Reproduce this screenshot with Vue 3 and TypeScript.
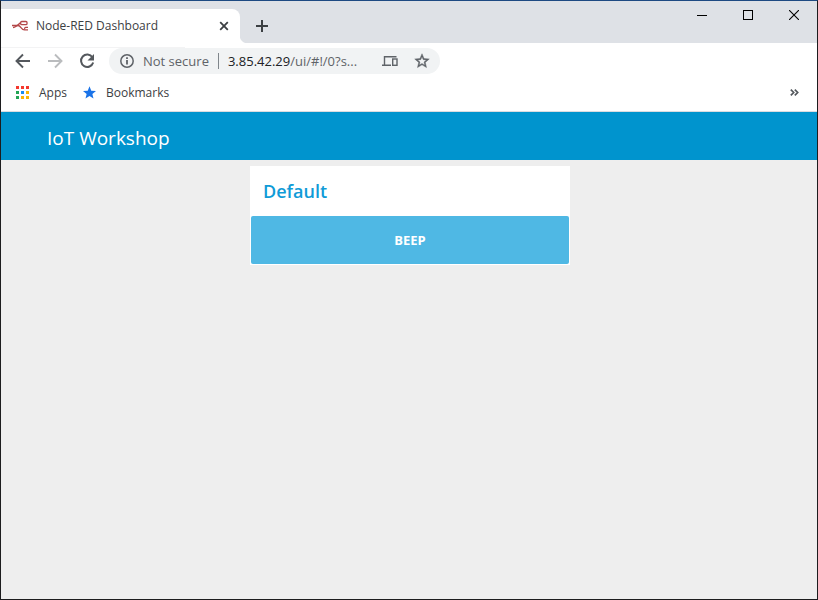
<script setup lang="ts">
import { ref } from 'vue'

const pageTitle = ref<string>('IoT Workshop')
const groupName = ref<string>('Default')
const host = '3.85.42.29'
const path = '/ui/#!/0?s...'

const appDots: string[] = [
  '#f4382e', '#f4382e', '#f4382e',
  '#23a455', '#1a8cf0', '#fbb404',
  '#23a455', '#fbb404', '#fbb404',
]
</script>

<template>
  <div class="window">
    <header class="tab-strip">
      <div class="tab">
        <svg class="favicon" viewBox="0 0 16 12" width="16" height="12" aria-hidden="true">
          <g fill="none" stroke="#b4484a" stroke-width="1.300">
            <path d="M0 5.500H4.500C7 5.500 6.500 3 9 3" />
            <path d="M1 7.500C4 7.500 4 5.500 6 5.500C9 5.500 9 9.800 12.500 9.800H16" />
            <rect x="8.700" y="1.500" width="6.300" height="3.200" rx="1" />
            <path d="M16 7.300H13.500C12.500 7.300 12.500 8 12.500 9.500" />
          </g>
        </svg>
        <span class="tab-title">Node-RED Dashboard</span>
        <button class="icon-button tab-close" type="button" aria-label="Close tab">
          <svg viewBox="0 0 10 10" width="10" height="10"><path d="M1.200 1.200L8.800 8.800M8.800 1.200L1.200 8.800" stroke="#3c4043" stroke-width="1.800" /></svg>
        </button>
      </div>
      <button class="icon-button new-tab" type="button" aria-label="New tab">
        <svg viewBox="0 0 12 12" width="12" height="12"><path d="M6 0V12M0 6H12" stroke="#3c4043" stroke-width="2" /></svg>
      </button>
      <div class="window-controls">
        <button class="icon-button" type="button" aria-label="Minimize">
          <svg viewBox="0 0 10 10" width="10" height="10"><path d="M0 5.500H10" stroke="#000" /></svg>
        </button>
        <button class="icon-button" type="button" aria-label="Maximize">
          <svg viewBox="0 0 10 10" width="10" height="10"><rect x=".5" y=".5" width="9" height="9" fill="none" stroke="#000" /></svg>
        </button>
        <button class="icon-button" type="button" aria-label="Close">
          <svg viewBox="0 0 10 10" width="10" height="10"><path d="M0 0L10 10M10 0L0 10" stroke="#000" stroke-width="1.100" /></svg>
        </button>
      </div>
    </header>

    <nav class="toolbar" aria-label="Navigation">
      <button class="icon-button nav-button" type="button" aria-label="Back">
        <svg viewBox="0 0 16 16" width="16" height="16"><path d="M15 8H2M8 1.500L1.500 8L8 14.500" fill="none" stroke="#54585d" stroke-width="1.900" /></svg>
      </button>
      <button class="icon-button nav-button" type="button" aria-label="Forward" disabled>
        <svg viewBox="0 0 16 16" width="16" height="16"><path d="M1 8H14M8 1.500L14.500 8L8 14.500" fill="none" stroke="#babcbe" stroke-width="1.900" /></svg>
      </button>
      <button class="icon-button nav-button" type="button" aria-label="Reload">
        <svg viewBox="0 0 16 16" width="16" height="16"><path d="M13.400 4.200A6.200 6.200 0 1 0 14.200 9.500" fill="none" stroke="#54585d" stroke-width="2" /><path d="M15 1V7.500H8.500Z" fill="#54585d" /></svg>
      </button>
      <div class="address">
        <svg class="info" viewBox="0 0 14 14" width="14" height="14" aria-hidden="true"><circle cx="7" cy="7" r="6.200" fill="none" stroke="#5f6368" stroke-width="1.500" /><path d="M6.100 6H7.900V10.500H6.100ZM6.100 3.300H7.900V5H6.100Z" fill="#5f6368" /></svg>
        <span class="security">Not secure</span>
        <span class="divider"></span>
        <span class="url"><span class="host">{{ host }}</span>{{ path }}</span>
        <button class="icon-button" type="button" aria-label="Send to your devices">
          <svg viewBox="0 0 16 12" width="16" height="12"><g fill="none" stroke="#5f6368" stroke-width="1.400"><path d="M2.500 9.500V1.700H14.500M0 10.300H9" /><rect x="10.700" y="4" width="4.300" height="6.300" /></g></svg>
        </button>
        <button class="icon-button" type="button" aria-label="Bookmark this tab">
          <svg viewBox="1 1 22 22" width="16" height="16"><path fill="#5f6368" d="M22 9.240l-7.190-.62L12 2 9.190 8.630 2 9.240l5.460 4.730L5.820 21 12 17.270 18.180 21l-1.630-7.030L22 9.240zM12 15.400l-3.760 2.270 1-4.280-3.320-2.880 4.380-.38L12 6.100l1.710 4.040 4.380.38-3.320 2.880 1 4.280L12 15.400z" stroke="#5f6368" stroke-width=".6" /></svg>
        </button>
      </div>
    </nav>

    <nav class="bookmarks" aria-label="Bookmarks">
      <a class="bookmark" href="#apps">
        <span class="apps-grid">
          <span v-for="(color, i) in appDots" :key="i" :style="{ background: color }"></span>
        </span>
        Apps
      </a>
      <a class="bookmark" href="#bookmarks">
        <svg viewBox="0 0 14 14" width="13" height="13" aria-hidden="true"><path fill="#1a73e8" d="M7 .3L8.900 5L14 5.300L10.100 8.500L11.300 13.500L7 10.700L2.700 13.500L3.900 8.500L0 5.300L5.100 5Z" /></svg>
        Bookmarks
      </a>
      <button class="icon-button overflow" type="button" aria-label="More bookmarks">
        <svg viewBox="0 0 9 7" width="9" height="7"><path d="M.8 .6L3.700 3.500L.8 6.400M4.800 .6L7.700 3.500L4.800 6.400" fill="none" stroke="#54585d" stroke-width="1.700" /></svg>
      </button>
    </nav>

    <div class="dashboard">
      <header class="title-bar"><h1>{{ pageTitle }}</h1></header>
      <main>
        <section class="card">
          <h2>{{ groupName }}</h2>
          <button class="beep" type="button">BEEP</button>
        </section>
      </main>
    </div>
  </div>
</template>

<style>
body {
  margin: 0;
}
</style>

<style scoped>
.window {
  box-sizing: border-box;
  min-height: 100vh;
  display: flex;
  flex-direction: column;
  border: 1px solid #1c1c1e;
  border-top-color: #1d4a82;
  background: #fff;
  font-family: "Open Sans", "Noto Sans", sans-serif;
}
.icon-button {
  display: flex;
  align-items: center;
  justify-content: center;
  padding: 0;
  border: 0;
  background: transparent;
}
.tab-strip {
  display: flex;
  height: 42px;
  background: #dee1e6;
}
.tab {
  box-sizing: border-box;
  display: flex;
  align-items: center;
  width: 239px;
  height: 34px;
  margin-top: 8px;
  padding: 0 10px 0 11px;
  border-radius: 0 8px 0 0;
  background: #fff;
}
.tab-title {
  flex: 1;
  margin-left: 8px;
  color: #3c4043;
  font-size: 12px;
  line-height: 16px;
  white-space: nowrap;
}
.tab-close {
  width: 12px;
  height: 16px;
}
.new-tab {
  width: 44px;
  height: 34px;
  margin-top: 8px;
}
.tab-strip {
  background: radial-gradient(circle at 100% 0, #dee1e6 8px, #fff 9px) 239px 100% / 8px 8px no-repeat, #dee1e6;
}
.window-controls {
  display: flex;
  height: 28px;
  margin-left: auto;
}
.window-controls .icon-button {
  width: 46px;
}
.toolbar {
  display: flex;
  align-items: center;
  height: 36px;
  padding: 0 6px;
  background: linear-gradient(#f3f3f4, #f3f3f4) 0 4px / 184px 1px no-repeat;
}
.nav-button {
  width: 32px;
  height: 32px;
}
.address {
  box-sizing: border-box;
  flex: 1;
  display: flex;
  align-items: center;
  max-width: 331px;
  height: 26px;
  margin-left: 6px;
  padding: 0 10px 0 11px;
  border-radius: 13px;
  background: #f1f3f4;
  color: #5f6368;
  font-size: 13px;
  line-height: 20px;
  white-space: nowrap;
}
.info {
  flex: none;
}
.security {
  margin-left: 9px;
}
.divider {
  width: 1px;
  height: 16px;
  margin: 0 9px;
  background: #80868b;
}
.url {
  flex: 1;
}
.host {
  color: #202124;
}
.address .icon-button {
  margin-left: 16px;
}
.bookmarks {
  display: flex;
  align-items: center;
  gap: 16px;
  height: 27px;
  padding: 0 18px 5px 15px;
  border-bottom: 1px solid #dadce0;
}
.bookmark {
  display: flex;
  align-items: center;
  gap: 10px;
  color: #3c4043;
  font-size: 12px;
  line-height: 16px;
  text-decoration: none;
}
.apps-grid {
  display: grid;
  grid-template-columns: repeat(3, 3px);
  grid-auto-rows: 3px;
  gap: 2px;
}
.overflow {
  height: 16px;
  margin-left: auto;
}
.dashboard {
  flex: 1;
  background: #eee;
}
.title-bar {
  height: 48px;
  padding-left: 46px;
  background: #0094ce;
}
h1 {
  margin: 0;
  padding-top: 2px;
  color: #fff;
  font-size: 19px;
  font-weight: 400;
  line-height: 48px;
}
main {
  display: flex;
  justify-content: center;
  padding: 6px;
}
.card {
  width: 320px;
  margin-left: 2px;
  background: #fff;
}
h2 {
  margin: 0;
  padding: 0 13px;
  color: #0f9bd7;
  font-size: 18px;
  font-weight: 600;
  line-height: 50px;
}
.beep {
  display: block;
  width: calc(100% - 2px);
  height: 48px;
  margin: 0 1px;
  padding: 0;
  border: 0;
  border-radius: 2px;
  background: #4fb8e4;
  color: #fff;
  font: 700 13px/48px "Open Sans", "Noto Sans", sans-serif;
}
.card::after {
  content: "";
  display: block;
  height: 1px;
}
</style>
